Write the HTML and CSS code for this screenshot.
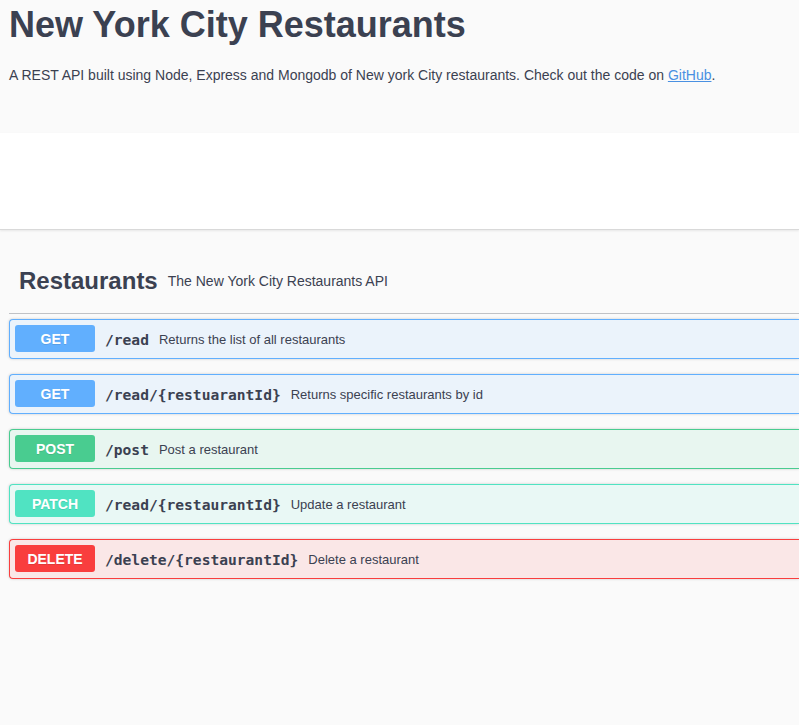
FILE: index.html
```html
<!DOCTYPE html>
<html lang="en">
<head>
<meta charset="utf-8">
<title>New York City Restaurants</title>
<link rel="stylesheet" href="styles.css">
</head>
<body>
<header class="info">
  <h1 class="title">New York City Restaurants</h1>
  <p class="desc">A REST API built using Node, Express and Mongodb of New york City restaurants. Check out the code on <a href="#" class="link">GitHub</a>.</p>
</header>
<div class="scheme-band"></div>
<main class="wrapper">
  <section class="tag-section">
    <div class="tag">
      <h2 class="tag-name">Restaurants</h2>
      <span class="tag-desc">The New York City Restaurants API</span>
    </div>
    <div class="opblock get">
      <span class="method">GET</span>
      <span class="path">/read</span>
      <span class="summary">Returns the list of all restaurants</span>
    </div>
    <div class="opblock get">
      <span class="method">GET</span>
      <span class="path">/read/{restuarantId}</span>
      <span class="summary">Returns specific restaurants by id</span>
    </div>
    <div class="opblock post">
      <span class="method">POST</span>
      <span class="path">/post</span>
      <span class="summary">Post a restaurant</span>
    </div>
    <div class="opblock patch">
      <span class="method">PATCH</span>
      <span class="path">/read/{restaurantId}</span>
      <span class="summary">Update a restaurant</span>
    </div>
    <div class="opblock delete">
      <span class="method">DELETE</span>
      <span class="path">/delete/{restaurantId}</span>
      <span class="summary">Delete a restaurant</span>
    </div>
  </section>
</main>
</body>
</html>
```
FILE: styles.css
```css
html, body {
  margin: 0;
  padding: 0;
  background: #fafafa;
  overflow: hidden;
  font-family: "Liberation Sans", Arial, sans-serif;
  color: #3b4151;
}

.info {
  box-sizing: border-box;
  height: 133px;
  padding: 5px 9px 0;
}

.title {
  margin: 0;
  font-size: 36px;
  line-height: 40px;
  font-weight: 700;
  color: #3b4151;
}

.desc {
  margin: 20px 0 0;
  font-size: 14px;
  line-height: 20px;
  color: #3b4151;
}

.link {
  color: #4990e2;
  text-decoration: underline;
}

.scheme-band {
  height: 96px;
  background: #fff;
  border-bottom: 1px solid #d9d9d9;
  box-shadow: 0 1px 2px rgba(0, 0, 0, 0.08);
}

.wrapper {
  padding: 26px 0 0 9px;
}

.tag {
  display: flex;
  align-items: center;
  padding: 10px 20px 17px 10px;
  border-bottom: 1px solid rgba(59, 65, 81, 0.3);
  margin-bottom: 5px;
}

.tag-name {
  margin: 0;
  font-size: 24px;
  line-height: 30px;
  font-weight: 700;
  color: #3b4151;
}

.tag-desc {
  margin-left: 10px;
  font-size: 14px;
  line-height: 20px;
  color: #3b4151;
}

.opblock {
  display: flex;
  align-items: center;
  height: 38px;
  padding: 0 5px;
  margin-bottom: 15px;
  border: 1px solid;
  border-right: 0;
  border-radius: 4px 0 0 4px;
  box-shadow: 0 0 3px rgba(0, 0, 0, 0.19);
}

.method {
  box-sizing: border-box;
  width: 80px;
  height: 27px;
  display: flex;
  align-items: center;
  justify-content: center;
  border-radius: 3px;
  font-size: 14px;
  font-weight: 700;
  color: #fff;
  text-shadow: 0 1px 0 rgba(0, 0, 0, 0.1);
  margin-bottom: 1px;
}

.path {
  padding: 0 10px;
  font-family: "DejaVu Sans Mono", "Liberation Mono", monospace;
  font-weight: 700;
  font-size: 14.6px;
  color: #3b4151;
}

.summary {
  font-size: 13px;
  color: #3b4151;
}

.get { background: #ebf3fb; border-color: #61affe; }
.get .method { background: #61affe; }

.post { background: #e8f6f0; border-color: #49cc90; }
.post .method { background: #49cc90; }

.patch { background: #e9f8f5; border-color: #50e3c2; }
.patch .method { background: #50e3c2; }

.delete { background: #fae7e7; border-color: #f93e3e; }
.delete .method { background: #f93e3e; }
```
